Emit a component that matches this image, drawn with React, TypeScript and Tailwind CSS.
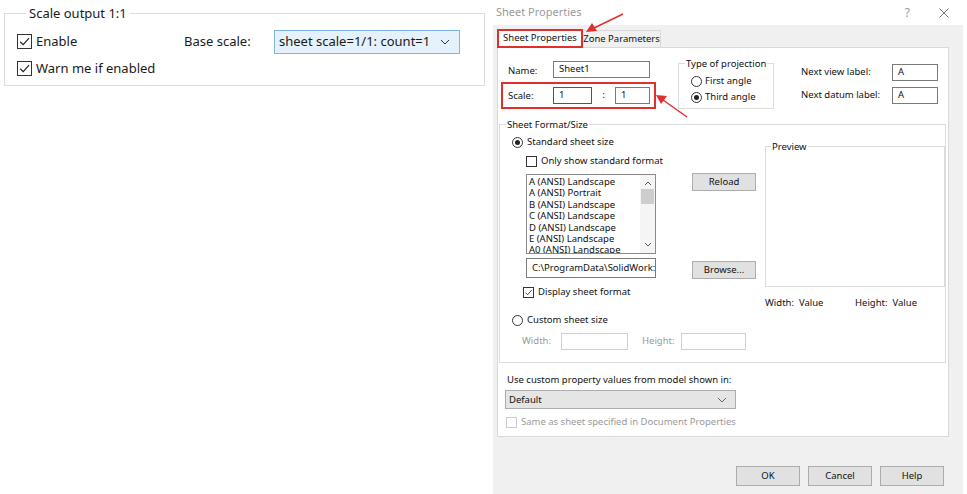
import React from "react";

const Check = ({ size = 15, disabled = false, checked = true }: { size?: number; disabled?: boolean; checked?: boolean }) => (
  <span
    className={`inline-flex shrink-0 items-center justify-center bg-white border ${disabled ? "border-[#cccccc]" : "border-[#333333]"}`}
    style={{ width: size, height: size }}
  >
    {checked && (
      <svg width={size - 2} height={size - 2} viewBox="0 0 12 12">
        <path d="M2 6.2 L4.8 9 L10.2 2.8" fill="none" stroke="#222" strokeWidth="1.1" />
      </svg>
    )}
  </span>
);

const Radio = ({ checked = false }: { checked?: boolean }) => (
  <span className="inline-flex w-[11px] h-[11px] shrink-0 items-center justify-center rounded-full border border-[#333333] bg-white">
    {checked && <span className="w-[5px] h-[5px] rounded-full bg-[#222]" />}
  </span>
);

const Input = ({ w, value = "", dark = false, h = 17, disabled = false }: { w: number; value?: string; dark?: boolean; h?: number; disabled?: boolean }) => (
  <div
    className={`flex items-center pl-[5px] bg-white border overflow-hidden whitespace-nowrap text-[9.5px] ${dark ? "border-[#555]" : disabled ? "border-[#d0d0d0]" : "border-[#7a7a7a]"}`}
    style={{ width: w, height: h }}
  >
    {value}
  </div>
);

const Btn = ({ label, w = 64, h = 18 }: { label: string; w?: number; h?: number }) => (
  <div
    className="flex items-center justify-center bg-[#e1e1e1] border border-[#adadad] text-[9.5px] text-[#111]"
    style={{ width: w, height: h }}
  >
    {label}
  </div>
);

const Chevron = ({ color = "#555" }: { color?: string }) => (
  <svg width="10" height="6" viewBox="0 0 10 6">
    <path d="M1 1 L5 5 L9 1" fill="none" stroke={color} strokeWidth="1" />
  </svg>
);

export default function App() {
  const items = [
    "A (ANSI) Landscape",
    "A (ANSI) Portrait",
    "B (ANSI) Landscape",
    "C (ANSI) Landscape",
    "D (ANSI) Landscape",
    "E (ANSI) Landscape",
    "A0 (ANSI) Landscape",
  ];
  return (
    <div className="relative w-[967px] h-[494px] bg-white flex font-['Noto_Sans',sans-serif] text-[#1a1a1a] overflow-hidden">
      {/* Left panel */}
      <div className="w-[493px] shrink-0 pl-[4px] pt-[4px]">
        <fieldset className="w-[481px] h-[82px] border border-[#dcdcdc] pl-[12px]">
          <legend className="ml-[9px] px-[3px] text-[13px] leading-[18px]">Scale output 1:1</legend>
          <div className="flex items-center mt-[12px] h-[15px]">
            <Check />
            <span className="ml-[4px] text-[13px] w-[148px]">Enable</span>
            <span className="text-[13px] w-[90px]">Base scale:</span>
            <div className="w-[186px] h-[24px] border border-[#7eb4ea] bg-[#e5f1fb] flex items-center pl-[4px] pr-[9px] justify-between text-[13px]">
              <span>sheet scale=1/1: count=1</span>
              <Chevron color="#333" />
            </div>
          </div>
          <div className="flex items-center mt-[12px] h-[15px]">
            <Check />
            <span className="ml-[4px] text-[13px]">Warn me if enabled</span>
          </div>
        </fieldset>
      </div>

      {/* Dialog */}
      <div className="w-[470px] shrink-0 flex flex-col">
        <div className="h-[25px] flex items-center pl-[3px] pr-[14px] text-[11px] text-[#9a9a9a]">
          <span className="flex-1">Sheet Properties</span>
          <span className="mr-[29px] text-[12px]">?</span>
          <svg width="10" height="10" viewBox="0 0 10 10">
            <path d="M0.5 0.5 L9.5 9.5 M9.5 0.5 L0.5 9.5" stroke="#777" strokeWidth="1" />
          </svg>
        </div>
        <div className="flex-1 h-[467px] bg-[#f0f0f0] flex flex-col pl-[4px] pt-[4px] pr-[14px] text-[9.5px] text-[#111] whitespace-nowrap">
          {/* Tabs */}
          <div className="flex h-[19px] items-end">
            <div className="h-[19px] w-[86px] border-2 border-[#e0302e] bg-white flex items-center justify-center relative z-10">
              Sheet Properties
            </div>
            <div className="h-[18px] w-[78px] border border-[#d9d9d9] border-l-0 bg-[#f0f0f0] flex items-center justify-center">
              Zone Parameters
            </div>
          </div>
          {/* Panel */}
          <div className="w-[452px] h-[390px] -mt-[1px] bg-white border border-[#d9d9d9] flex flex-col">
            {/* Top section */}
            <div className="flex items-start h-[70px]">
              <div className="ml-[3px] mt-[13px] w-[155px] shrink-0 flex flex-col">
                <div className="flex items-center h-[17px] pl-[7px]">
                  <span className="w-[45px] pt-[4px]">Name:</span>
                  <Input w={97} value="Sheet1" />
                </div>
                <div className="mt-[4px] w-[155px] h-[27px] border-2 border-[#e0302e] flex items-center pl-[5px]">
                  <span className="w-[45px] pt-[1px]">Scale:</span>
                  <Input w={39} value="1" dark />
                  <span className="w-[23px] text-center">:</span>
                  <Input w={35} value="1" />
                </div>
              </div>
              <fieldset className="ml-[22px] mt-[9px] w-[96px] min-w-0 shrink-0 h-[52px] border border-[#dcdcdc]">
                <legend className="ml-[6px] px-[1px] leading-[13px]">Type of projection</legend>
                <div className="flex items-center mt-[5px] h-[13px] pl-[12px]">
                  <Radio />
                  <span className="ml-[3px]">First angle</span>
                </div>
                <div className="flex items-center mt-[3px] h-[13px] pl-[12px]">
                  <Radio checked />
                  <span className="ml-[3px]">Third angle</span>
                </div>
              </fieldset>
              <div className="ml-[27px] mt-[16px] flex flex-col">
                <div className="flex items-center h-[17px]">
                  <span className="w-[91px]">Next view label:</span>
                  <Input w={46} value="A" />
                </div>
                <div className="flex items-center h-[17px] mt-[6px]">
                  <span className="w-[91px]">Next datum label:</span>
                  <Input w={46} value="A" />
                </div>
              </div>
            </div>

            {/* Sheet Format/Size */}
            <fieldset className="ml-[1px] w-[447px] h-[245px] border border-[#dcdcdc]">
              <legend className="ml-[6px] px-[1px] leading-[13px]">Sheet Format/Size</legend>
              <div className="flex">
                <div className="w-[264px] flex flex-col">
                  <div className="flex items-center h-[13px] mt-[5px] pl-[12px]">
                    <Radio checked />
                    <span className="ml-[4px]">Standard sheet size</span>
                  </div>
                  <div className="flex items-center h-[13px] mt-[6px] pl-[26px]">
                    <Check size={11} checked={false} />
                    <span className="ml-[4px]">Only show standard format</span>
                  </div>
                  <div className="flex items-start mt-[3px] pl-[26px]">
                    <div className="w-[130px] h-[80px] border border-[#8a8a8a] bg-white mt-[3px] flex">
                      <div className="flex-1 overflow-hidden pl-[2px] pt-[1px] leading-[11.4px]">
                        {items.map((t) => (
                          <div key={t} className="h-[11.4px]">{t}</div>
                        ))}
                      </div>
                      <div className="w-[15px] flex flex-col items-center py-[3px] bg-[#f5f5f5]">
                        <svg width="8" height="5" viewBox="0 0 8 5" className="mt-[3px]">
                          <path d="M1 4 L4 1 L7 4" fill="none" stroke="#555" strokeWidth="1" />
                        </svg>
                        <div className="w-[13px] h-[15px] bg-[#cdcdcd] mt-[3px]" />
                        <div className="flex-1" />
                        <svg width="8" height="5" viewBox="0 0 8 5" className="mb-[3px]">
                          <path d="M1 1 L4 4 L7 1" fill="none" stroke="#555" strokeWidth="1" />
                        </svg>
                      </div>
                    </div>
                    <div className="ml-[36px] mt-[2px]">
                      <Btn label="Reload" />
                    </div>
                  </div>
                  <div className="flex items-start mt-[4px] pl-[26px]">
                    <Input w={130} h={20} value="C:\ProgramData\SolidWork:" />
                    <div className="ml-[36px] mt-[3px]">
                      <Btn label="Browse..." />
                    </div>
                  </div>
                  <div className="flex items-center h-[13px] mt-[7px] pl-[23px]">
                    <Check size={11} />
                    <span className="ml-[4px]">Display sheet format</span>
                  </div>
                  <div className="flex items-center h-[13px] mt-[15px] pl-[12px]">
                    <Radio />
                    <span className="ml-[4px]">Custom sheet size</span>
                  </div>
                  <div className="flex items-center h-[17px] mt-[6px] pl-[22px] text-[#9a9a9a]">
                    <span className="w-[39px]">Width:</span>
                    <Input w={67} disabled />
                    <span className="ml-[14px] w-[39px]">Height:</span>
                    <Input w={65} disabled />
                  </div>
                </div>
                <div className="ml-[1px] w-[180px] flex flex-col">
                  <fieldset className="mt-[9px] h-[147px] border border-[#dcdcdc]">
                    <legend className="ml-[5px] px-[1px] leading-[13px]">Preview</legend>
                  </fieldset>
                  <div className="flex mt-[9px]">
                    <span className="w-[90px]">Width:&nbsp; Value</span>
                    <span>Height:&nbsp; Value</span>
                  </div>
                </div>
              </div>
            </fieldset>

            {/* Below */}
            <div className="pl-[9px] mt-[10px]">Use custom property values from model shown in:</div>
            <div className="ml-[7px] mt-[3px] w-[231px] h-[19px] bg-[#e5e5e5] border border-[#adadad] flex items-center justify-between pl-[3px] pr-[8px]">
              <span>Default</span>
              <Chevron color="#666" />
            </div>
            <div className="flex items-center mt-[6px] pl-[8px] text-[#9a9a9a]">
              <Check size={11} checked={false} disabled />
              <span className="ml-[4px]">Same as sheet specified in Document Properties</span>
            </div>
          </div>
          {/* Buttons */}
          <div className="flex justify-end gap-[8px] mt-[29px] pr-[5px]">
            <Btn label="OK" w={64} h={20} />
            <Btn label="Cancel" w={64} h={20} />
            <Btn label="Help" w={64} h={20} />
          </div>
        </div>
      </div>

      {/* Red arrows overlay */}
      <svg className="absolute left-0 top-0 pointer-events-none" width="967" height="494">
        <line x1="623" y1="14" x2="594" y2="28" stroke="#e0302e" strokeWidth="1.5" />
        <polygon points="586,32 592,23 597,31" fill="#e0302e" />
        <line x1="687" y1="117" x2="663" y2="100" stroke="#e0302e" strokeWidth="1.5" />
        <polygon points="656,95 667,96 661,104" fill="#e0302e" />
      </svg>
    </div>
  );
}
